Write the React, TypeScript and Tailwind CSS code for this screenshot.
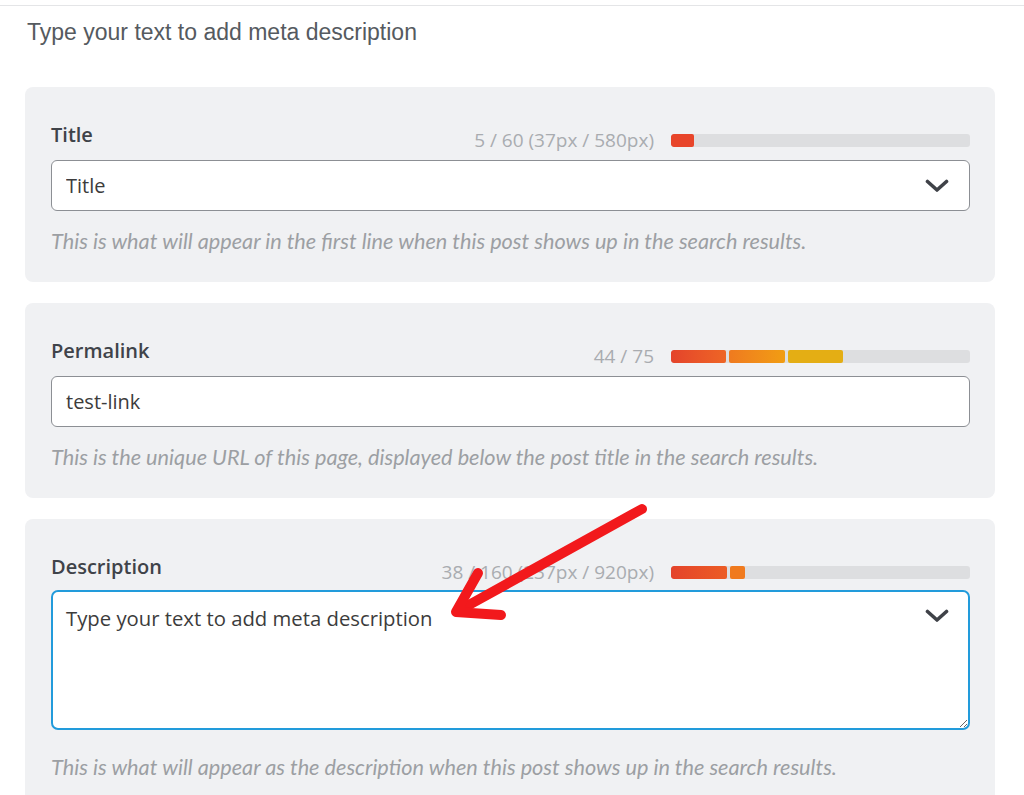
type Segment = { width: number; className: string };

const baseFont = { fontFamily: "'Open Sans', 'Noto Sans', sans-serif" };

function Chevron({ className }: { className: string }) {
  return (
    <svg
      className={`pointer-events-none absolute ${className}`}
      width="24"
      height="14"
      viewBox="0 0 24 14"
      fill="none"
      aria-hidden="true"
    >
      <polyline points="2.5,2.5 12,11 21.5,2.5" stroke="#3f4248" strokeWidth="3.6" strokeLinecap="round" strokeLinejoin="round" />
    </svg>
  );
}

function LengthBar({ segments }: { segments: Segment[] }) {
  return (
    <div className="flex h-[13px] w-[299px] gap-[3px] overflow-hidden rounded-[3px] bg-[#dddee0]">
      {segments.map((segment, index) => (
        <div key={index} className={`h-full rounded-[2px] ${segment.className}`} style={{ width: segment.width }} />
      ))}
    </div>
  );
}

type FieldPanelProps = {
  label: string;
  counter: string;
  segments: Segment[];
  help: string;
  children: React.ReactNode;
  headerSpacing?: string;
  helpSpacing?: string;
};

function FieldPanel({
  label,
  counter,
  segments,
  help,
  children,
  headerSpacing = "mb-[8px]",
  helpSpacing = "mt-[16px]",
}: FieldPanelProps) {
  return (
    <section className="rounded-[8px] bg-[#f0f1f3] pb-[27px] pl-[26px] pr-[25px] pt-[34px]">
      <div className={`${headerSpacing} flex items-end justify-between`}>
        <h3 className="pb-[3px] text-[20px] font-semibold leading-[28px] text-[#3f4349]">{label}</h3>
        <div className="flex items-center gap-[17px]">
          <span className="text-[19px] leading-[24px] text-[#a9acb0]">{counter}</span>
          <LengthBar segments={segments} />
        </div>
      </div>
      {children}
      <p className={`${helpSpacing} font-['Lato'] text-[21.7px] italic leading-[28px] text-[#9c9fa3]`}>{help}</p>
    </section>
  );
}

export default function App() {
  return (
    <div className="min-h-screen bg-white text-[#3c3c3c]" style={baseFont}>
      <div className="pt-[5px]">
        <div className="border-t border-[#e4e5e7]" />
      </div>
      <p className="mt-[12px] pl-[27px] font-['Liberation_Sans'] text-[23px] leading-[28px] text-[#555a60]">
        Type your text to add meta description
      </p>

      <div className="relative mt-[41px] box-content flex w-[970px] flex-col gap-[21px] pl-[25px]">
        <FieldPanel
          label="Title"
          counter="5 / 60 (37px / 580px)"
          segments={[{ width: 23, className: "bg-[#e8452a]" }]}
          help="This is what will appear in the first line when this post shows up in the search results."
        >
          <div className="relative">
            <input
              readOnly
              value="Title"
              className="h-[51px] w-full rounded-[6px] border border-[#8c8f94] bg-white pl-[14px] pr-[50px] text-[20px] text-[#3c3c3c] outline-none"
            />
            <Chevron className="right-[21px] top-[19px]" />
          </div>
        </FieldPanel>

        <FieldPanel
          label="Permalink"
          counter="44 / 75"
          segments={[
            { width: 55, className: "bg-gradient-to-r from-[#e4432b] to-[#ee6525]" },
            { width: 56, className: "bg-gradient-to-r from-[#ef7a1f] to-[#f19d12]" },
            { width: 55, className: "bg-[#e4ae14]" },
          ]}
          help="This is the unique URL of this page, displayed below the post title in the search results."
        >
          <input
            readOnly
            value="test-link"
            className="h-[51px] w-full rounded-[6px] border border-[#8c8f94] bg-white pl-[14px] text-[20px] text-[#3c3c3c] outline-none"
          />
        </FieldPanel>

        <FieldPanel
          label="Description"
          counter="38 / 160 (237px / 920px)"
          segments={[
            { width: 56, className: "bg-gradient-to-r from-[#e4432b] to-[#ec5c24]" },
            { width: 15, className: "bg-[#f07a1e]" },
          ]}
          help="This is what will appear as the description when this post shows up in the search results."
          headerSpacing="mb-[6px]"
          helpSpacing="mt-[23px]"
        >
          <div className="relative">
            <textarea
              readOnly
              value="Type your text to add meta description"
              className="block h-[140px] w-full rounded-[7px] border-2 border-[#229bdb] bg-white pb-[13px] pl-[13px] pr-[50px] pt-[12px] text-[20.3px] leading-[28px] text-[#3c3c3c] outline-none"
            />
            <Chevron className="right-[21px] top-[19px]" />
          </div>
        </FieldPanel>

        <svg
          className="pointer-events-none absolute left-0 top-0 overflow-visible"
          width="1"
          height="1"
          aria-hidden="true"
        >
          <g
            transform="translate(0 -87)"
            fill="none"
            stroke="#f2191c"
            strokeWidth="10"
            strokeLinecap="round"
            strokeLinejoin="round"
          >
            <path d="M642 509 L458 611" />
            <path d="M478 573 L456 612 L501 615" />
          </g>
        </svg>
      </div>
    </div>
  );
}
